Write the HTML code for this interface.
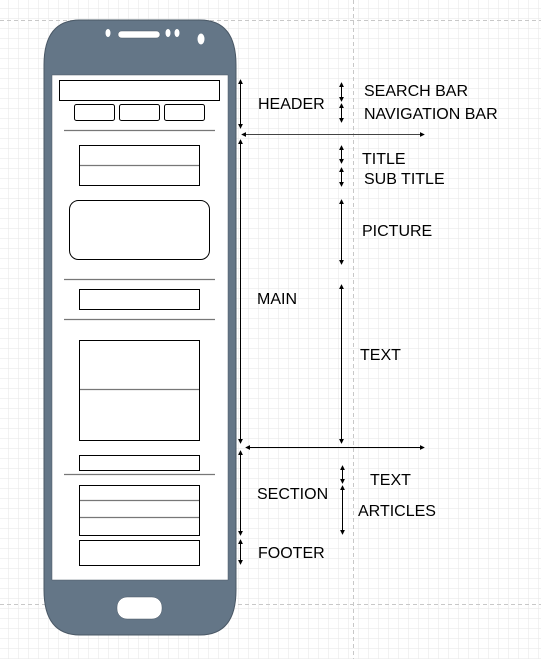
<!DOCTYPE html>
<html><head><meta charset="utf-8"><style>
html,body{margin:0;padding:0;background:#fff}
svg{display:block}
text{font-family:"Liberation Sans",sans-serif;font-size:16px;fill:#000}
</style></head><body>
<svg width="541" height="659" viewBox="0 0 541 659" xmlns="http://www.w3.org/2000/svg">
<defs>
<pattern id="g" x="-1" y="-1" width="10" height="10" patternUnits="userSpaceOnUse">
<path d="M10 0V10M0 10H10" stroke="#e6e6e6" stroke-width="1" fill="none"/>
</pattern>
<marker id="a" viewBox="0 0 6 6" refX="5" refY="3" markerWidth="5" markerHeight="5" orient="auto-start-reverse"><path d="M0 0L6 3L0 6z" fill="#000"/></marker>
</defs>
<rect width="541" height="659" fill="#fff"/>
<rect width="541" height="659" fill="url(#g)"/>
<path d="M0 20.5H541M0 604.5H541" stroke="#c8c8c8" stroke-dasharray="4 3"/>
<path d="M353.5 0V659" stroke="#c8c8c8" stroke-dasharray="4 3"/>
<!-- phone -->
<path d="M80 20H200Q236 20 236 65V590Q236 635 200 635H80Q44 635 44 590V65Q44 20 80 20Z" fill="#647687" stroke="#4a5866"/>
<rect x="52" y="75" width="176" height="505" fill="#fff" stroke="#4a5866" stroke-width="0.5"/>
<rect x="118" y="31" width="42" height="7" rx="3.5" fill="#fff" stroke="#4a5866" stroke-width="0.5"/>
<ellipse cx="108" cy="33" rx="2.5" ry="4" fill="#fff"/>
<ellipse cx="168" cy="33" rx="2.5" ry="4" fill="#fff"/>
<ellipse cx="177" cy="33" rx="2.5" ry="4" fill="#fff"/>
<ellipse cx="201" cy="39" rx="3.5" ry="5.5" fill="#fff"/>
<rect x="117" y="597" width="45" height="22" rx="10" fill="#fff" stroke="#4a5866" stroke-width="0.5"/>
<!-- screen content -->
<g fill="#fff" stroke="#000" stroke-width="1">
<rect x="59.5" y="80.5" width="160" height="20"/>
<rect x="74.5" y="104.5" width="40" height="16" rx="2"/>
<rect x="119.5" y="104.5" width="40" height="16" rx="2"/>
<rect x="164.5" y="104.5" width="40" height="16" rx="2"/>
<rect x="79.5" y="145.5" width="120" height="20"/>
<rect x="79.5" y="165.5" width="120" height="20"/>
<rect x="69.5" y="200.5" width="140" height="59" rx="9"/>
<rect x="79.5" y="289.5" width="120" height="20"/>
<rect x="79.5" y="340.5" width="120" height="100"/>
<rect x="79.5" y="455.5" width="120" height="15"/>
<rect x="79.5" y="485.5" width="120" height="50"/>
<rect x="79.5" y="540.5" width="120" height="25"/>
</g>
<g stroke="#777" stroke-width="1.2">
<path d="M64 130.5H215M64 279.5H215M64 319.5H215M64 474.5H215M80 389.5H199M80 500.5H199M80 517.5H199M80 165.5H199"/>
<path d="M80 101H219M80 466H199M80 441H199" stroke-width="0"/>
</g>
<!-- arrows -->
<g stroke="#000" stroke-width="1" fill="none" marker-start="url(#a)" marker-end="url(#a)">
<path d="M240.5 80V128"/>
<path d="M240.5 140V443"/>
<path d="M240.5 451V535"/>
<path d="M240.5 540V564"/>
<path d="M242 134.5H424" stroke="#444"/>
<path d="M246 447.5H424"/>
<path d="M341.5 83V101"/>
<path d="M341.5 104V122"/>
<path d="M341.5 146V163"/>
<path d="M341.5 168V186"/>
<path d="M341.5 200V264"/>
<path d="M341.5 285V443"/>
<path d="M342.5 466V483"/>
<path d="M342.5 486V534"/>
</g>
<text x="258" y="109">HEADER</text>
<text x="364" y="96">SEARCH BAR</text>
<text x="364" y="119">NAVIGATION BAR</text>
<text x="362" y="164">TITLE</text>
<text x="364" y="184">SUB TITLE</text>
<text x="362" y="236">PICTURE</text>
<text x="257" y="304">MAIN</text>
<text x="360" y="360">TEXT</text>
<text x="370" y="485">TEXT</text>
<text x="257" y="499">SECTION</text>
<text x="358" y="516">ARTICLES</text>
<text x="258" y="558">FOOTER</text>
</svg>
</body></html>
